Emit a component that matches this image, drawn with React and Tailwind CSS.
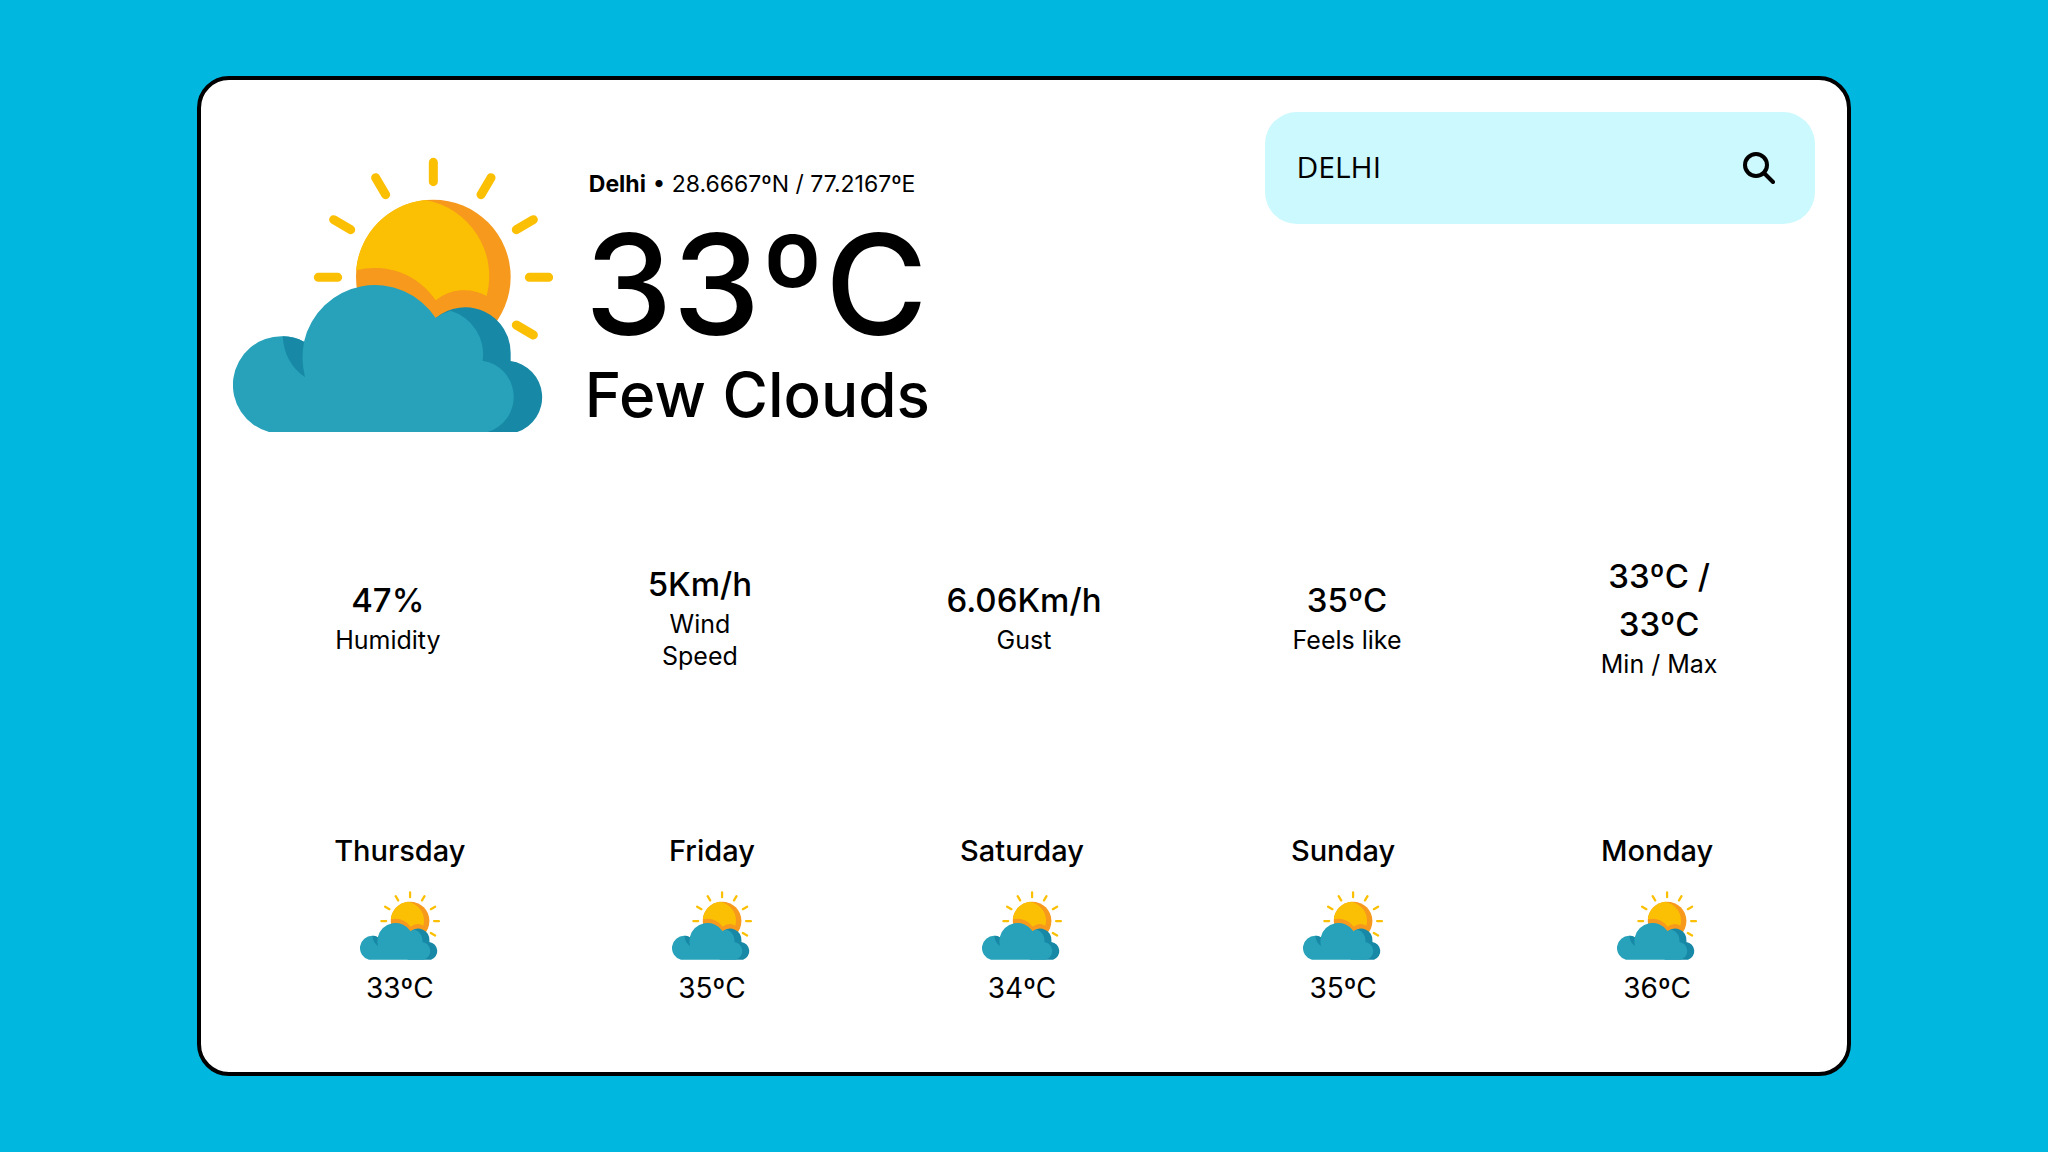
const metrics = [
  { value: "47%", label: "Humidity" },
  { value: "5Km/h", label: "Wind Speed" },
  { value: "6.06Km/h", label: "Gust" },
  { value: "35ºC", label: "Feels like" },
  { value: "33ºC / 33ºC", label: "Min / Max" },
];

const forecast = [
  { day: "Thursday", temp: "33ºC" },
  { day: "Friday", temp: "35ºC" },
  { day: "Saturday", temp: "34ºC" },
  { day: "Sunday", temp: "35ºC" },
  { day: "Monday", temp: "36ºC" },
];

function FewClouds({ className }) {
  return (
    <svg viewBox="129 261 960 825" className={className} role="img" aria-label="Few clouds">
      <g stroke="#FBBF04" strokeWidth="27" strokeLinecap="round">
        <path d="M730 277V335M557 323L587 374M903 323L873 374M431 449L482 479M1030 449L979 479M385 622H443M1018 622H1076M979 765L1030 795" />
      </g>
      <circle cx="730" cy="621" r="232" fill="#F6991C" />
      <path
        fill="#FBBF04"
        d="M498 601A232 232 0 0 1 705 390A232 232 0 0 1 890 678A137 137 0 0 0 737 691A220 220 0 0 0 498 601Z"
      />
      <path
        fill="#1789A6"
        d="M737 744A137 137 0 0 1 962 852V873A110 110 0 0 1 982 1086H700Z"
      />
      <path
        fill="#27A2BA"
        d="M237 1086A146 146 0 0 1 278 799Q312 799 342 815A218 218 0 0 1 737 744Q757 729 782 722A137 137 0 0 1 878 872A110 110 0 0 1 893 1086Z"
      />
      <path fill="#1789A6" d="M278 799Q312 800 342 815Q332 868 345 922Q283 879 278 799Z" />
    </svg>
  );
}

function SearchIcon() {
  return (
    <svg viewBox="0 0 32 32" className="size-8" fill="none" stroke="#000" strokeWidth="4" aria-hidden="true">
      <circle cx="13" cy="13" r="11" />
      <path d="M21 21L30 30" strokeLinecap="round" />
    </svg>
  );
}

export default function App() {
  return (
    <main className="flex min-h-screen items-center justify-center bg-[#00b7df] font-['Inter',sans-serif] text-black">
      <div className="flex min-h-[calc(100vh-152px)] w-[calc(80%+16px)] flex-col rounded-[32px] border-4 border-black bg-white p-8">
        <header className="flex items-start justify-between">
          <div className="flex items-start gap-8 pt-[45px]">
            <FewClouds className="w-80" />
            <div>
              <p className="pl-1 text-[23px] leading-[54px]">
                <b className="font-bold">Delhi</b> • 28.6667ºN / 77.2167ºE
              </p>
              <h1 className="text-[140px] leading-[146px] font-medium">33ºC</h1>
              <h2 className="text-[62px] leading-[76px] font-medium">Few Clouds</h2>
            </div>
          </div>
          <form
            className="flex h-28 w-[34.8%] items-center justify-between rounded-[32px] bg-[#cbf9fd] px-8"
            onSubmit={(e) => e.preventDefault()}
          >
            <input
              type="text"
              aria-label="City"
              defaultValue="DELHI"
              className="min-w-0 flex-1 bg-transparent pb-1 font-['Open_Sans',sans-serif] text-[30px] outline-none"
            />
            <button type="submit" aria-label="Search" className="p-2">
              <SearchIcon />
            </button>
          </form>
        </header>

        <section className="mt-[119px] grid grid-cols-[310fr_314fr_334fr_312fr_312fr] items-center text-center">
          {metrics.map((m) => (
            <div key={m.label} className="mx-auto flex w-31 flex-col items-center">
              <p className="text-[33px] leading-12 font-medium">{m.value}</p>
              <p className="text-[25px] leading-8">{m.label}</p>
            </div>
          ))}
        </section>

        <section className="mt-[147px] grid grid-cols-[334fr_290fr_330fr_312fr_316fr] text-center">
          {forecast.map((f) => (
            <div key={f.day} className="flex flex-col items-center">
              <h3 className="text-[29px] leading-12 font-medium">{f.day}</h3>
              <FewClouds className="my-4 w-20" />
              <p className="text-[28px] leading-6">{f.temp}</p>
            </div>
          ))}
        </section>
      </div>
    </main>
  );
}
